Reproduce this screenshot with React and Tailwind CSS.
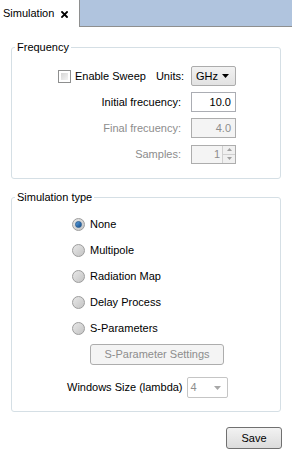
import React, { useState } from 'react';

const font = { fontFamily: '"Liberation Sans", Arial, sans-serif' };

const Radio = ({ checked, label, onClick }) => (
    <button type="button" onClick={onClick} className="flex items-center h-[13px] text-left">
        <span className="relative w-[13px] h-[13px] rounded-full border border-[#9c9c9c] bg-gradient-to-br from-[#e8e8e8] to-[#c4c4c4] flex items-center justify-center">
            {checked && (
                <span className="w-[7px] h-[7px] rounded-full bg-gradient-to-br from-[#5aa0de] to-[#134d8c] border border-[#2b5f94]" />
            )}
        </span>
        <span className="ml-[5px] text-[11px] leading-[13px] text-black">{label}</span>
    </button>
);

const Caret = ({ color = '#000' }) => (
    <svg width="7" height="4" viewBox="0 0 7 4">
        <path d="M0 0h7L3.5 4z" fill={color} />
    </svg>
);

const App = () => {
    const [sim, setSim] = useState('None');
    const [sweep, setSweep] = useState(false);
    const options = ['None', 'Multipole', 'Radiation Map', 'Delay Process', 'S-Parameters'];

    return (
        <div className="w-[292px] h-[456px] bg-white flex flex-col text-[11px] text-black" style={font}>
            {/* Tab strip */}
            <div className="flex h-[27px] shrink-0">
                <div className="w-[80px] h-[27px] bg-white border-r border-[#8e8f8f] flex items-center pl-[3px]">
                    <span className="text-[11px]">Simulation</span>
                    <svg className="ml-[7px] mt-[1px]" width="7" height="7" viewBox="0 0 7 7">
                        <path d="M1 1l5 5M6 1L1 6" stroke="#000" strokeWidth="1.8" strokeLinecap="square" />
                    </svg>
                </div>
                <div className="flex-1 bg-[#b0c4de] border-b border-[#8e8f8f]" />
            </div>

            {/* Frequency */}
            <fieldset className="mx-[11px] mt-[13px] border border-[#d5dfe5] rounded-[3px] px-0 pt-[12px] pb-[14px]">
                <legend className="ml-[3px] px-[2px] leading-[14px]">Frequency</legend>
                <div className="flex flex-col gap-[6px] pr-[44px]">
                    <div className="flex items-center justify-end h-[20px]">
                        <button type="button" onClick={() => setSweep(!sweep)} className="flex items-center">
                            <span className="w-[13px] h-[13px] border border-[#8e8f8f] bg-white p-[2px] flex">
                                <span className="flex-1 bg-gradient-to-br from-[#d6d6d6] to-[#f4f4f4] flex items-center justify-center">
                                    {sweep && (
                                        <svg width="7" height="7" viewBox="0 0 7 7">
                                            <path d="M0.5 3.5l2 2 4-5" stroke="#222" strokeWidth="1.4" fill="none" />
                                        </svg>
                                    )}
                                </span>
                            </span>
                            <span className="ml-[4px]">Enable Sweep</span>
                        </button>
                        <span className="ml-[10px]">Units:</span>
                        <div className="ml-[7px] w-[45px] h-[20px] rounded-[2px] border border-[#acacac] bg-gradient-to-b from-[#f2f2f2] to-[#e2e2e2] flex items-center justify-between pl-[4px] pr-[6px]">
                            <span>GHz</span>
                            <Caret />
                        </div>
                    </div>
                    <div className="flex items-center justify-end h-[20px]">
                        <span>Initial frecuency:</span>
                        <div className="ml-[10px] w-[45px] h-[20px] border border-[#abadb3] bg-white text-right pr-[4px] leading-[18px]">10.0</div>
                    </div>
                    <div className="flex items-center justify-end h-[20px] text-[#8d8d8d]">
                        <span>Final frecuency:</span>
                        <div className="ml-[10px] w-[45px] h-[20px] border border-[#adadad] bg-[#f4f4f4] text-right pr-[4px] leading-[18px]">4.0</div>
                    </div>
                    <div className="flex items-center justify-end h-[20px] text-[#8d8d8d]">
                        <span>Samples:</span>
                        <div className="ml-[10px] w-[45px] h-[19px] border border-[#adadad] bg-[#f4f4f4] flex">
                            <span className="flex-1 text-right pr-[2px] leading-[17px]">1</span>
                            <div className="w-[13px] flex flex-col border-l border-[#d0d0d0]">
                                <div className="flex-1 flex items-center justify-center border-b border-[#d0d0d0] bg-[#f0f0f0]">
                                    <svg width="5" height="3" viewBox="0 0 5 3"><path d="M0 3h5L2.5 0z" fill="#a0a0a0" /></svg>
                                </div>
                                <div className="flex-1 flex items-center justify-center bg-[#f0f0f0]">
                                    <svg width="5" height="3" viewBox="0 0 5 3"><path d="M0 0h5L2.5 3z" fill="#a0a0a0" /></svg>
                                </div>
                            </div>
                        </div>
                    </div>
                </div>
            </fieldset>

            {/* Simulation type */}
            <fieldset className="mx-[11px] mt-[11px] border border-[#d5dfe5] rounded-[3px] px-0 pt-[14px] pb-[13px]">
                <legend className="ml-[3px] px-[2px] leading-[14px]">Simulation type</legend>
                <div className="flex flex-col gap-[13px] pl-[60px]">
                    {options.map((o) => (
                        <Radio key={o} label={o} checked={sim === o} onClick={() => setSim(o)} />
                    ))}
                </div>
                <button
                    type="button"
                    disabled
                    className="ml-[78px] mt-[9px] w-[134px] h-[21px] rounded-[3px] border border-[#adadad] bg-[#f4f4f4] text-[#8d8d8d] text-[11px]"
                >
                    S-Parameter Settings
                </button>
                <div className="flex items-center mt-[12px] pl-[55px]">
                    <span>Windows Size (lambda)</span>
                    <div className="ml-[4px] w-[41px] h-[21px] rounded-[2px] border border-[#c5c5c5] bg-white flex items-center justify-between pl-[3px] pr-[6px] text-[#8d8d8d]">
                        <span>4</span>
                        <Caret color="#a8a8a8" />
                    </div>
                </div>
            </fieldset>

            <div className="flex justify-end pr-[10px] mt-[15px]">
                <button
                    type="button"
                    className="w-[56px] h-[22px] rounded-[3px] border border-[#707070] bg-gradient-to-b from-[#f2f2f2] to-[#dcdcdc] text-[11px]"
                >
                    Save
                </button>
            </div>
        </div>
    );
};

export default App;
